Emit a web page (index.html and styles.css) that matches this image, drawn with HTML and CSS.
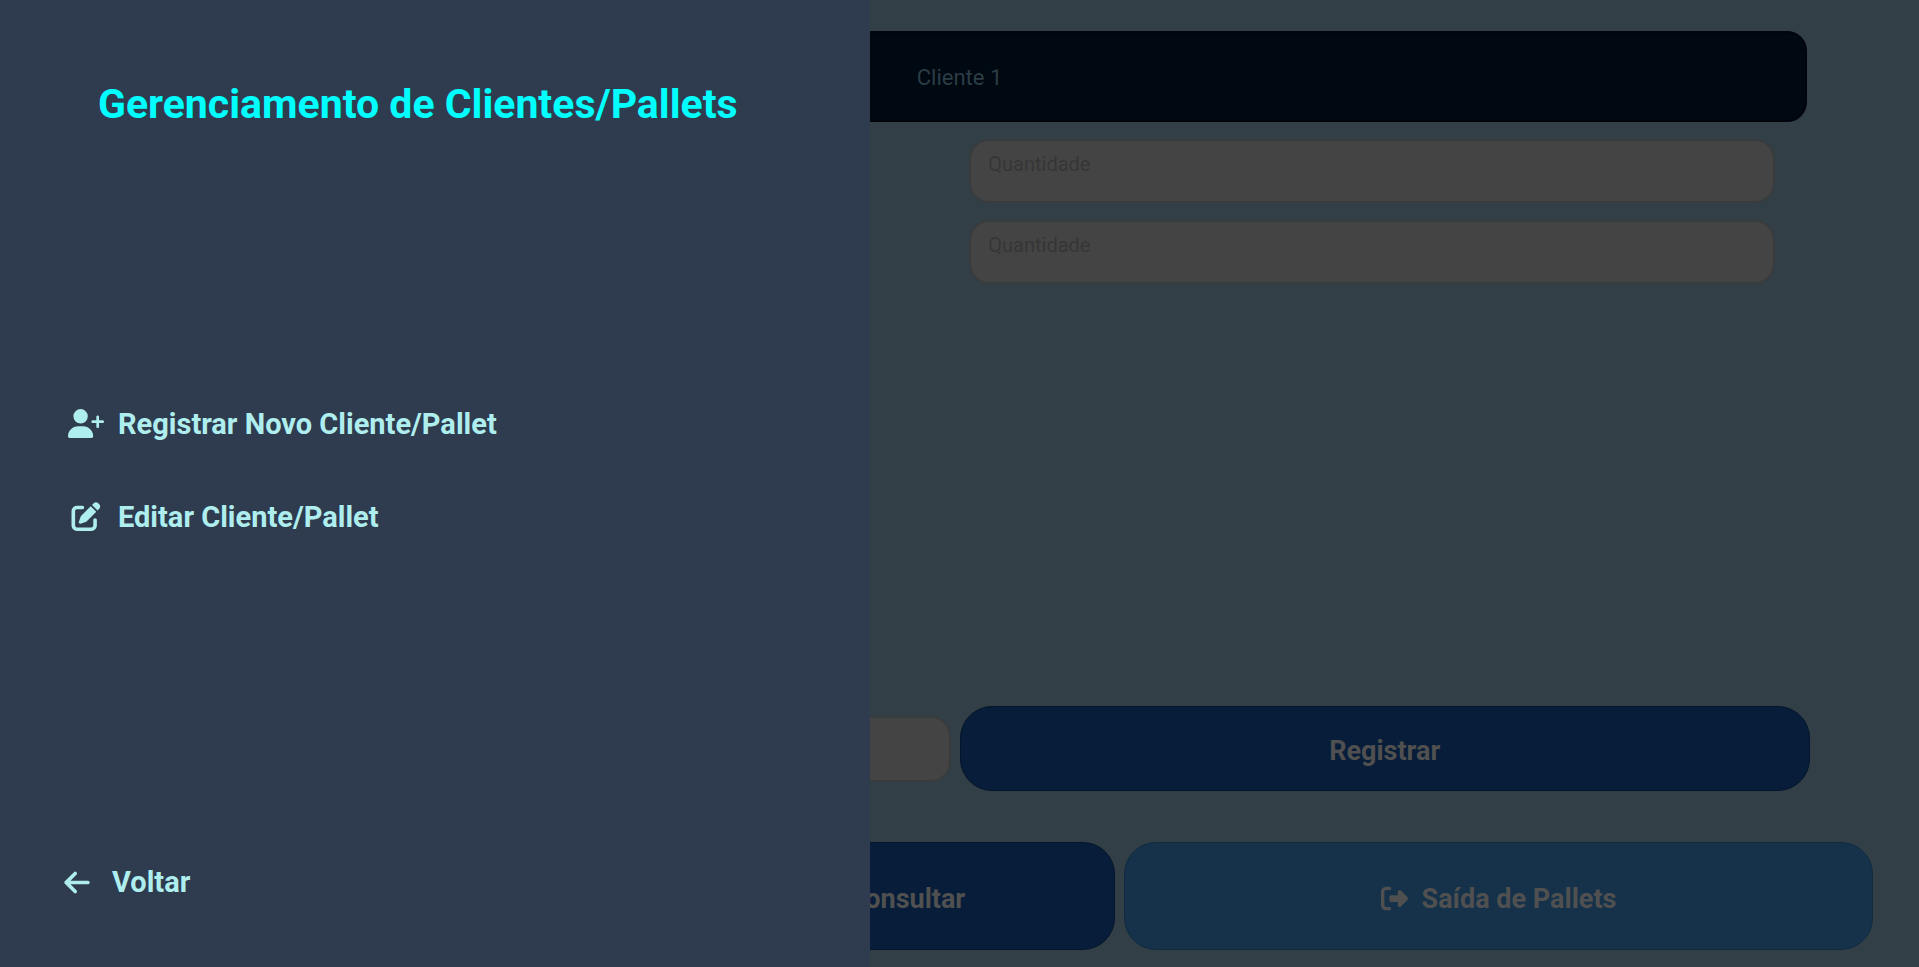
FILE: index.html
```html
<!DOCTYPE html>
<html lang="pt-BR">
<head>
<meta charset="utf-8">
<meta name="viewport" content="width=device-width, initial-scale=1">
<title>Gerenciamento de Clientes/Pallets</title>
<link rel="stylesheet" href="styles.css">
</head>
<body>
<main class="page">
  <select class="client-select" aria-label="Cliente">
    <option>Cliente 1</option>
  </select>
  <div class="quantities">
    <textarea class="field" aria-label="Quantidade" placeholder="Quantidade"></textarea>
    <textarea class="field" aria-label="Quantidade" placeholder="Quantidade"></textarea>
  </div>
  <div class="register-row">
    <input class="field document" type="text" aria-label="Documento">
    <button class="button register" type="button">Registrar</button>
  </div>
  <div class="actions">
    <button class="button consult" type="button">Consultar</button>
    <button class="button exit" type="button">
      <svg class="exit-icon" viewBox="0 0 512 512" aria-hidden="true"><path d="M377.9 105.9L500.7 228.7c7.2 7.2 11.3 17.1 11.3 27.3s-4.1 20.1-11.3 27.3L377.9 406.1c-6.4 6.4-15 9.9-24 9.9c-18.7 0-33.9-15.2-33.9-33.9l0-62.1-128 0c-17.7 0-32-14.3-32-32l0-64c0-17.7 14.3-32 32-32l128 0 0-62.1c0-18.7 15.2-33.9 33.9-33.9c9 0 17.6 3.6 24 9.9zM160 96L96 96c-17.7 0-32 14.3-32 32l0 256c0 17.7 14.3 32 32 32l64 0c17.7 0 32 14.3 32 32s-14.3 32-32 32l-64 0c-53 0-96-43-96-96L0 128C0 75 43 32 96 32l64 0c17.7 0 32 14.3 32 32s-14.3 32-32 32z"/></svg>
      Saída de Pallets
    </button>
  </div>
</main>
<aside class="drawer">
  <h1 class="title">Gerenciamento de Clientes/Pallets</h1>
  <nav class="menu">
    <a class="item" href="#registrar">
      <svg class="icon" viewBox="0 0 640 512" aria-hidden="true"><path d="M96 128a128 128 0 1 1 256 0A128 128 0 1 1 96 128zM0 482.3C0 383.8 79.8 304 178.3 304l91.4 0C368.2 304 448 383.8 448 482.3c0 16.4-13.3 29.7-29.7 29.7L29.7 512C13.3 512 0 498.7 0 482.3zM504 312l0-64-64 0c-13.3 0-24-10.7-24-24s10.7-24 24-24l64 0 0-64c0-13.3 10.7-24 24-24s24 10.7 24 24l0 64 64 0c13.3 0 24 10.7 24 24s-10.7 24-24 24l-64 0 0 64c0 13.3-10.7 24-24 24s-24-10.7-24-24z"/></svg>
      Registrar Novo Cliente/Pallet
    </a>
    <a class="item" href="#editar">
      <svg class="icon" viewBox="0 0 512 512" aria-hidden="true"><path d="M471.6 21.7c-21.9-21.9-57.3-21.9-79.2 0L362.3 51.7l97.9 97.9 30.1-30.1c21.9-21.9 21.9-57.3 0-79.2L471.6 21.7zm-299.2 220c-6.1 6.1-10.8 13.6-13.5 21.9l-29.6 88.8c-2.9 8.6-.6 18.1 5.8 24.6s15.9 8.7 24.6 5.8l88.8-29.6c8.2-2.7 15.7-7.4 21.9-13.5L437.7 172.3 339.7 74.3 172.4 241.7zM96 64C43 64 0 107 0 160V416c0 53 43 96 96 96H352c53 0 96-43 96-96V320c0-17.7-14.3-32-32-32s-32 14.3-32 32v96c0 17.7-14.3 32-32 32H96c-17.7 0-32-14.3-32-32V160c0-17.7 14.3-32 32-32h96c17.7 0 32-14.3 32-32s-14.3-32-32-32H96z"/></svg>
      Editar Cliente/Pallet
    </a>
  </nav>
  <button class="back" type="button">
    <svg class="back-icon" viewBox="0 0 448 512" aria-hidden="true"><path d="M9.4 233.4c-12.5 12.5-12.5 32.8 0 45.3l160 160c12.5 12.5 32.8 12.5 45.3 0s12.5-32.8 0-45.3L109.2 288 416 288c17.7 0 32-14.3 32-32s-14.3-32-32-32l-306.7 0L214.6 118.6c12.5-12.5 12.5-32.8 0-45.3s-32.8-12.5-45.3 0l-160 160z"/></svg>
    Voltar
  </button>
</aside>
</body>
</html>
```
FILE: styles.css
```css
* { box-sizing: border-box; }

body {
  margin: 0;
  background: #333f46;
  font-family: Roboto, "Liberation Sans", sans-serif;
}

svg { fill: currentColor; flex: none; }

.page {
  min-height: 100vh;
  display: flex;
  flex-direction: column;
  padding: 31px 46px 17px;
}

.client-select {
  appearance: none;
  margin: 0 66px;
  height: 91px;
  border: 2px solid #00050c;
  border-radius: 20px;
  padding-top: 2px;
  background: #000811;
  color: #2b3d45;
  font: 22px Roboto, sans-serif;
  text-align: center;
  text-align-last: center;
  opacity: 1;
}

.quantities {
  display: flex;
  flex-direction: column;
  align-items: flex-end;
  gap: 17px;
  margin: 17px 98px 0 0;
}

.field {
  height: 64px;
  border: 2px solid #383c3f;
  border-radius: 20px;
  background: #444;
  color: #505050;
  font: 20px/24px Roboto, sans-serif;
  padding: 11px 17px;
  resize: none;
}

.quantities .field { width: 46.6%; }

.field::placeholder { color: #363636; opacity: 1; }

.register-row {
  display: flex;
  align-items: center;
  gap: 9px;
  margin: auto 63px 51px;
}

.document { flex: 1; min-width: 0; height: 66px; }

.button {
  display: flex;
  align-items: center;
  justify-content: center;
  gap: 14px;
  border: 1px solid #05152b;
  border-radius: 32px;
  background: #071d39;
  color: #505050;
  font: bold 27px Roboto, sans-serif;
}

.register { width: 50%; height: 85px; padding-top: 6px; }

.actions {
  display: flex;
  justify-content: flex-end;
  gap: 9px;
}

.actions .button { height: 108px; padding-top: 6px; }

.consult { width: 26%; padding-left: 64px; }

.exit {
  width: 41%;
  background: #15324a;
  border-color: #102a40;
}

.exit-icon { width: 27px; height: 27px; }

.drawer {
  position: fixed;
  inset: 0 auto 0 0;
  width: 45.35%;
  display: flex;
  flex-direction: column;
  justify-content: space-between;
  padding: 80px 64px 67px;
  background: #2f3b4e;
  color: #afeeee;
}

.title {
  margin: 0 0 0 34px;
  color: #0ff;
  font-size: 41px;
  line-height: 48px;
}

.menu {
  display: flex;
  flex-direction: column;
  gap: 57px;
  padding-bottom: 52px;
}

.item {
  display: flex;
  align-items: center;
  gap: 14px;
  padding-left: 4px;
  color: inherit;
  font-size: 29px;
  font-weight: bold;
  line-height: 36px;
  text-decoration: none;
}

.icon { width: 36px; height: 29px; }

.back {
  display: flex;
  align-items: center;
  align-self: flex-start;
  gap: 22px;
  padding: 0;
  border: 0;
  background: none;
  color: inherit;
  font: bold 29px/36px Roboto, sans-serif;
}

.back-icon { width: 26px; height: 29px; }
```
